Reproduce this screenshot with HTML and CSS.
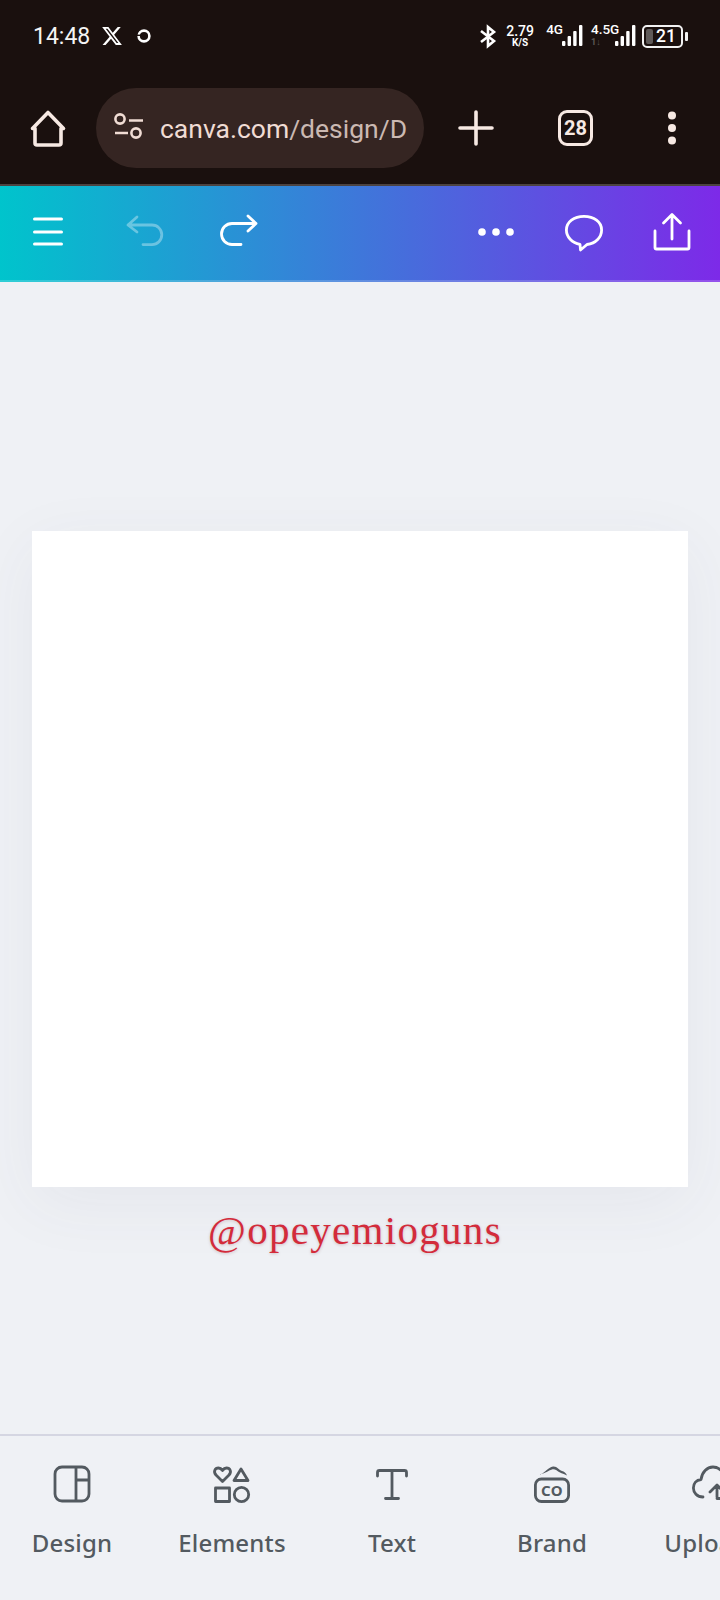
FILE: index.html
```html
<!DOCTYPE html>
<html lang="en">
<head>
    <meta charset="UTF-8">
    <meta name="viewport" content="width=device-width, initial-scale=1.0">
    <title>Canva design</title>
    <link rel="stylesheet" href="styles.css">
</head>
<body>

    <div class="browser">
        <div class="status-bar">
            <span class="time">14:48</span>
            <svg class="x-logo" width="22" height="22" viewBox="0 0 24 24"><path fill="#fff" d="M18.244 2.25h3.308l-7.227 8.26 8.502 11.24H16.17l-5.214-6.817L4.99 21.75H1.68l7.73-8.835L1.254 2.25H8.08l4.713 6.231zm-1.161 17.52h1.833L7.084 4.126H5.117z"/></svg>
            <svg class="sync" width="16" height="16" viewBox="0 0 16 16"><circle cx="8" cy="8" r="5.4" fill="none" stroke="#fff" stroke-width="2.6"/><rect x="0" y="6.6" width="5" height="1.4" fill="#1a100e"/></svg>

            <div class="status-right">
                <svg class="bt" width="18" height="26" viewBox="0 0 18 26"><path fill="none" stroke="#fff" stroke-width="2.6" d="M2 8l13 10-6 5V4l6 5L2 19"/></svg>
                <div class="speed"><span>2.79</span><small>K/S</small></div>
                <div class="net net-4g"><span>4G</span></div>
                <svg class="bars" width="21" height="22" viewBox="0 0 21 22"><rect x="0" y="16" width="3.4" height="5" rx="1" fill="#fff"/><rect x="5.6" y="11" width="3.4" height="10" rx="1" fill="#fff"/><rect x="11.2" y="6" width="3.4" height="15" rx="1" fill="#fff"/><rect x="17" y="0" width="3.4" height="21" rx="1" fill="#fff"/></svg>
                <div class="net net-45"><span>4.5G</span><small>1↓</small></div>
                <svg class="bars bars-second" width="21" height="22" viewBox="0 0 21 22"><rect x="0" y="16" width="3.4" height="5" rx="1" fill="#fff"/><rect x="5.6" y="11" width="3.4" height="10" rx="1" fill="#fff"/><rect x="11.2" y="6" width="3.4" height="15" rx="1" fill="#fff"/><rect x="17" y="0" width="3.4" height="21" rx="1" fill="#fff"/></svg>
                <div class="battery"><i class="level"></i><span>21</span></div>
                <i class="battery-nub"></i>
            </div>
        </div>

        <div class="toolbar">
            <svg class="tool" width="48" height="48" viewBox="0 0 48 48"><path fill="none" stroke="#f7e9e3" stroke-width="3.6" stroke-linejoin="round" stroke-linecap="round" d="M11 24.500V39a2 2 0 0 0 2 2h22a2 2 0 0 0 2-2V24.500M11 24.500H8.500L24 8.500l15.500 16H37"/></svg>
            <div class="url-pill">
                <svg width="34" height="34" viewBox="0 0 34 34"><g fill="none" stroke="#f0dcd4" stroke-width="2.600"><circle cx="8" cy="8" r="4.600"/><circle cx="24" cy="22" r="4.600"/><path d="M17 9.500h14M3 22h13"/></g></svg>
                <div class="url"><span class="host">canva.com</span><span class="path">/design/D</span></div>
            </div>
            <svg class="tool tool-plus" width="48" height="48" viewBox="0 0 48 48"><path stroke="#f7e9e3" stroke-width="3.600" stroke-linecap="round" d="M24 8v32M8 24h32"/></svg>
            <div class="tabs">28</div>
            <svg class="tool tool-more" width="48" height="48" viewBox="0 0 48 48"><g fill="#f7e9e3"><circle cx="24" cy="11.500" r="4"/><circle cx="24" cy="24" r="4"/><circle cx="24" cy="36.500" r="4"/></g></svg>
        </div>
    </div>

    <div class="editor-bar">
        <svg width="48" height="48" viewBox="0 0 48 48"><path stroke="#fff" stroke-width="3" stroke-linecap="round" d="M10.500 10h27M10.500 23h27M10.500 35h27"/></svg>
        <svg class="undo" width="48" height="48" viewBox="0 0 48 48"><path fill="none" stroke="#fff" stroke-width="2.800" stroke-linecap="round" stroke-linejoin="round" d="M15 8l-9 8 9 7M6 16h24a9.800 9.800 0 0 1 0 19.600h-9"/></svg>
        <svg class="redo" width="48" height="48" viewBox="0 0 48 48"><path fill="none" stroke="#fff" stroke-width="2.800" stroke-linecap="round" stroke-linejoin="round" d="M34 7l8 7.500-8 7.500M42 14.500H18a10.500 10.500 0 0 0 0 21h9"/></svg>
        <div class="spacer"></div>
        <svg width="48" height="48" viewBox="0 0 48 48"><g fill="#fff"><circle cx="10" cy="23" r="3.800"/><circle cx="24" cy="23" r="3.800"/><circle cx="38" cy="23" r="3.800"/></g></svg>
        <svg class="gap" width="48" height="48" viewBox="0 0 48 48"><path fill="none" stroke="#fff" stroke-width="2.800" stroke-linejoin="round" d="M24 7.400C14 7.400 6.400 13 6.400 21 6.400 28 12 34 20 35.400L20.500 41 27 35.500C36 34.500 41.600 28 41.600 21 41.600 13 34 7.400 24 7.400z"/></svg>
        <svg class="gap" width="48" height="48" viewBox="0 0 48 48"><path fill="none" stroke="#fff" stroke-width="2.800" stroke-linecap="round" stroke-linejoin="round" d="M24 30V6M15.500 14L24 5.500l8.500 8.500M7 22v16.500a1.500 1.500 0 0 0 1.500 1.500h31a1.500 1.500 0 0 0 1.500-1.500V22"/></svg>
    </div>

    <div class="workspace">
        <div class="page"></div>
        <div class="watermark">@opeyemioguns</div>
    </div>

    <nav class="bottom-nav">
        <div class="nav-item">
            <svg width="48" height="48" viewBox="0 0 48 48"><g fill="none" stroke="#535a60" stroke-width="2.800"><rect x="7" y="7" width="34" height="34" rx="7"/><path d="M28 7v34M28 20h13"/></g></svg>
            <span>Design</span>
        </div>
        <div class="nav-item">
            <svg width="48" height="48" viewBox="0 0 48 48"><g fill="none" stroke="#535a60" stroke-width="2.800" stroke-linejoin="round"><path d="M14.500 21.500L8 15c-3-3.500-1-7 2.500-7 2 0 3 1 4 2.500 1-1.500 2-2.500 4-2.500 3.500 0 5.500 3.500 2.500 7z"/><path d="M33 9l7 11.500H26z"/><rect x="7.500" y="28" width="14" height="13.500"/><circle cx="33.500" cy="34.500" r="7.200"/></g></svg>
            <span>Elements</span>
        </div>
        <div class="nav-item">
            <svg width="48" height="48" viewBox="0 0 48 48"><path fill="none" stroke="#535a60" stroke-width="2.800" stroke-linecap="round" stroke-linejoin="round" d="M9.500 16v-3.500a2 2 0 0 1 2-2h25a2 2 0 0 1 2 2V16M24 10.500V38.500M17.500 38.500h13"/></svg>
            <span>Text</span>
        </div>
        <div class="nav-item">
            <svg width="48" height="48" viewBox="0 0 48 48"><rect x="7.400" y="19" width="33.200" height="22.500" rx="6" fill="none" stroke="#535a60" stroke-width="2.800"/><path fill="#535a60" d="M12 14.500C17 13 20 7.500 25 6.500c4-.5 6 3.500 9 4.500 2 .6 4 2 5 4.500-3-1.500-5-2-7-3-3-1.500-5-3.800-8-3-4 1-6 4-12 4.500z"/><text x="24" y="35.500" class="co">CO</text></svg>
            <span>Brand</span>
        </div>
        <div class="nav-item">
            <svg width="48" height="48" viewBox="0 0 48 48"><path fill="none" stroke="#535a60" stroke-width="2.800" stroke-linecap="round" stroke-linejoin="round" d="M15 37C9 37 5.400 32.500 5.400 28c0-4.500 3-8 7.600-8.500C14 12 19 7 25 7c6.500 0 10.500 5 11.500 11.500 5 .5 8.500 5 8.500 10M22 32l7-7 7 7M29 26v11M29 38.500h10"/></svg>
            <span>Uploads</span>
        </div>
    </nav>

</body>
</html>
```

FILE: styles.css
```css
* {
    box-sizing: border-box;
}

html, body {
    margin: 0;
    padding: 0;
}

body {
    width: 720px;
    height: 1600px;
    overflow: hidden;
    display: flex;
    flex-direction: column;
    background-color: #eff1f5;
    font-family: 'Roboto', sans-serif;
}

svg {
    display: block;
    flex-shrink: 0;
}

/* browser chrome */
.browser {
    height: 186px;
    background-color: #1a100e;
    border-bottom: 2px solid #4c4341;
}

.status-bar {
    height: 72px;
    display: flex;
    align-items: center;
    padding-left: 33px;
    color: #fff;
}

.time {
    font-size: 23px;
    color: #f4f4f4;
}

.x-logo {
    margin-left: 11px;
}

.sync {
    margin-left: 13px;
}

.status-right {
    display: flex;
    align-items: center;
    margin-left: auto;
    margin-right: 32px;
    height: 26px;
}

.speed {
    margin-left: 9px;
    width: 28px;
    display: flex;
    flex-direction: column;
    align-items: center;
    font-weight: 500;
    line-height: 1;
}

.speed span {
    font-size: 14px;
}

.speed small {
    font-size: 10px;
    font-weight: 700;
}

.net {
    display: flex;
    flex-direction: column;
    align-self: flex-start;
    font-size: 13.5px;
    font-weight: 500;
    line-height: 16px;
    margin-top: -2px;
}

.net small {
    font-size: 9px;
    line-height: 10px;
    color: #5b5655;
    font-weight: 700;
}

.net-4g {
    margin-left: 12px;
}

.net-45 {
    margin-left: 8px;
    width: 24px;
    white-space: nowrap;
}

.bars {
    margin-left: -1px;
}

.bars-second {
    margin-left: 0;
}

.battery {
    width: 41px;
    height: 23px;
    margin-left: 6px;
    border: 2px solid #f2f2f2;
    border-radius: 5px;
    display: flex;
    align-items: center;
    padding-left: 2px;
    font-size: 17.500px;
    font-weight: 500;
}

.battery .level {
    width: 7px;
    height: 15px;
    background-color: #5f5a59;
    border-radius: 2px;
    margin-right: 3px;
}

.battery-nub {
    width: 3px;
    height: 9px;
    margin-left: 2px;
    background-color: #f2f2f2;
    border-radius: 1px;
}

.toolbar {
    height: 112px;
    display: flex;
    align-items: center;
    padding-left: 24px;
}

.url-pill {
    width: 328px;
    height: 80px;
    margin-left: 24px;
    padding-left: 16px;
    border-radius: 40px;
    background-color: #352522;
    display: flex;
    align-items: center;
    gap: 14px;
    overflow: hidden;
}

.url {
    font-size: 26.500px;
    white-space: nowrap;
}

.url .host {
    color: #f0dcd4;
}

.url .path {
    color: #cbb9b2;
}

.tool-plus {
    margin-left: 28px;
}

.tabs {
    width: 35px;
    height: 36px;
    margin-left: 58px;
    border: 3.500px solid #f7e9e3;
    border-radius: 9px;
    display: flex;
    align-items: center;
    justify-content: center;
    font-size: 20px;
    font-weight: 700;
    color: #f7e9e3;
}

.tool-more {
    margin-left: 55px;
}

/* canva header */
.editor-bar {
    height: 96px;
    padding: 0 24px;
    display: flex;
    align-items: center;
    background: linear-gradient(90deg, #00c4cc, #7d2ae8);
    border-bottom: 2px solid rgba(255, 255, 255, 0.18);
}

.undo {
    margin-left: 50px;
    opacity: 0.35;
}

.redo {
    margin-left: 44px;
}

.spacer {
    flex: 1;
}

.gap {
    margin-left: 40px;
}

/* design area */
.workspace {
    flex: 1;
    padding: 249px 32px 0;
}

.page {
    width: 656px;
    height: 656px;
    background-color: #fff;
    box-shadow: 0 16px 64px rgba(64, 72, 100, 0.06);
}

.watermark {
    margin-top: 17px;
    padding-right: 10px;
    text-align: center;
    font-family: 'Liberation Serif', serif;
    font-size: 41px;
    letter-spacing: 1.3px;
    line-height: 52px;
    color: #d32b3b;
    text-shadow: 0 1px 3px rgba(120, 40, 50, 0.25);
}

/* bottom tabs */
.bottom-nav {
    height: 166px;
    flex-shrink: 0;
    margin-left: -8px;
    width: 900px;
    padding-top: 24px;
    display: flex;
    border-top: 2px solid #d5d6e2;
}

.nav-item {
    width: 160px;
    display: flex;
    flex-direction: column;
    align-items: center;
    color: #535a60;
}

.nav-item span {
    margin-top: 19px;
    font-family: 'Noto Sans', sans-serif;
    font-size: 24px;
    font-weight: 500;
    letter-spacing: 0.2px;
    line-height: 32px;
}

.co {
    font-family: 'Noto Sans', sans-serif;
    font-size: 15px;
    font-weight: 700;
    letter-spacing: 0.5px;
    fill: #535a60;
    text-anchor: middle;
}
```
